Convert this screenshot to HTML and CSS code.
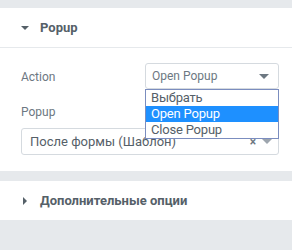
FILE: index.html
```html
<!DOCTYPE html>
<html lang="en">
<head>
  <meta charset="UTF-8">
  <title>Popup</title>
  <link rel="stylesheet" href="styles.css">
</head>
<body>
  <div class="panel">
    <div class="section open">
      <div class="section-head">
        <span class="caret down"></span>
        <span class="section-title">Popup</span>
      </div>
      <div class="section-body">
        <div class="control inline">
          <label>Action</label>
          <div class="select-wrap">
            <div class="select">
              <span>Open Popup</span>
              <span class="arrow"></span>
            </div>
            <!-- opened native list -->
            <ul class="options">
              <li>Выбрать</li>
              <li class="selected">Open Popup</li>
              <li>Close Popup</li>
            </ul>
          </div>
        </div>
        <div class="control">
          <label>Popup</label>
          <div class="select wide">
            <span>После формы (Шаблон)</span>
            <span class="clear">×</span>
            <span class="arrow"></span>
          </div>
        </div>
      </div>
    </div>

    <div class="section">
      <div class="section-head">
        <span class="caret right"></span>
        <span class="section-title">Дополнительные опции</span>
      </div>
    </div>
  </div>
</body>
</html>
```

FILE: styles.css
```css
body {
  margin: 0;
  background-color: #e6e9ec;
  font-family: Roboto, 'Liberation Sans', sans-serif;
  color: #6d7882;
}

.panel {
  padding-top: 8px;
}

.section {
  background-color: #fff;
  margin-bottom: 10px;
}

.section-head {
  height: 39px;
  display: flex;
  align-items: center;
  padding-left: 21px;
  gap: 11px;
}

.open .section-head {
  border-bottom: 1px solid #e6e9ec;
}

.section-title {
  font-size: 13px;
  font-weight: bold;
  color: #556068;
}

.caret {
  width: 0;
  height: 0;
  border-style: solid;
}

.caret.down {
  border-width: 4px 4px 0 4px;
  border-color: #556068 transparent transparent transparent;
}

.caret.right {
  border-width: 4px 0 4px 4px;
  border-color: transparent transparent transparent #556068;
  margin-left: 2px;
  margin-right: 2px;
}

.section-body {
  padding: 15px 13px 16px 21px;
}

.control label {
  display: block;
  font-size: 12px;
}

.control.inline {
  display: flex;
  align-items: center;
  justify-content: space-between;
  margin-bottom: 16px;
}

.control.inline label {
  padding-top: 1px;
}

.select-wrap {
  position: relative;
  width: 134px;
}

.select {
  height: 26px;
  box-sizing: border-box;
  border: 1px solid #d5dadf;
  border-radius: 3px;
  display: flex;
  align-items: center;
  padding: 0 9px 0 6px;
  font-size: 12px;
  color: #6d7882;
}

.select span:first-child {
  flex: 1;
}

.select .arrow {
  width: 0;
  height: 0;
  border-style: solid;
  border-width: 5px 5px 0 5px;
  border-color: #6d7882 transparent transparent transparent;
}

.select.wide {
  margin-top: 9px;
  height: 27px;
  font-size: 13px;
  padding-left: 8px;
  padding-right: 6px;
  color: #556068;
}

.select .clear {
  color: #6d7882;
  font-size: 12px;
  font-weight: bold;
  margin-right: 6px;
}

.select.wide .arrow {
  border-color: #9da5ae transparent transparent transparent;
}

.options {
  position: absolute;
  left: 0;
  top: 26px;
  width: 134px;
  box-sizing: border-box;
  margin: 0;
  padding: 0;
  list-style: none;
  background-color: #fff;
  border: 1px solid #7b8dbf;
  font-size: 13px;
  letter-spacing: -0.2px;
  color: #556068;
}

.options li {
  height: 16px;
  line-height: 16px;
  padding-left: 5px;
}

.options li.selected {
  background-color: #1e90ff;
  color: #fff;
}
```
